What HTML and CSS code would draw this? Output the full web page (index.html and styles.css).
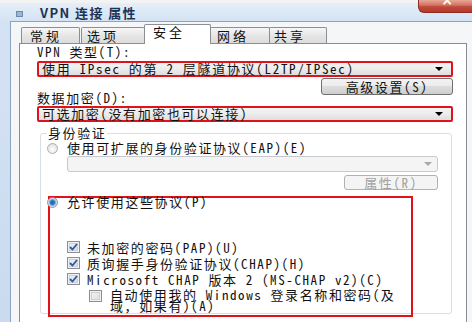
FILE: index.html
```html
<!DOCTYPE html>
<html lang="zh-CN">

<head>
    <meta charset="UTF-8">
    <meta name="viewport" content="width=device-width, initial-scale=1.0">
    <title>VPN 连接 属性</title>
    <link rel="stylesheet" href="styles.css">
</head>

<body>

<div class="window">
    <!-- title bar -->
    <div class="titlebar">
        <div class="app-icon"></div>
        <div class="title">VPN 连接 属性</div>
        <div class="close-btn"><span>×</span></div>
    </div>

    <div class="client">
        <div class="tabs">
            <div class="tab">常规</div>
            <div class="tab">选项</div>
            <div class="tab active">安全</div>
            <div class="tab">网络</div>
            <div class="tab">共享</div>
        </div>

        <div class="panel">
            <div class="label">VPN 类型(T):</div>
            <div class="combo marked wide">使用 IPsec 的第 2 层隧道协议(L2TP/IPSec)<span class="arrow"></span></div>

            <div class="row-split">
                <div class="label label-low">数据加密(D):</div>
                <button class="btn btn-adv">高级设置(S)</button>
            </div>
            <div class="combo marked">可选加密(没有加密也可以连接)<span class="arrow"></span></div>

            <fieldset class="group">
                <legend>身份验证</legend>
                <div class="option"><span class="radio"></span>使用可扩展的身份验证协议(EAP)(E)</div>
                <div class="combo disabled"><span class="arrow"></span></div>
                <div class="btn-row"><button class="btn disabled">属性(R)</button></div>

                <!-- red box drawn round the protocol list -->
                <div class="highlight">
                    <div class="option option-tight"><span class="radio checked"></span>允许使用这些协议(P)</div>
                    <div class="check-list">
                        <div class="check">
                            <span class="box checked"><svg width="9" height="8" viewBox="0 0 9 8"><path d="M1 4 L3.5 6.5 L8 1" fill="none" stroke="#33579b" stroke-width="1.8"/></svg></span>
                            未加密的密码(PAP)(U)
                        </div>
                        <div class="check">
                            <span class="box checked"><svg width="9" height="8" viewBox="0 0 9 8"><path d="M1 4 L3.5 6.5 L8 1" fill="none" stroke="#33579b" stroke-width="1.8"/></svg></span>
                            质询握手身份验证协议(CHAP)(H)
                        </div>
                        <div class="check">
                            <span class="box checked"><svg width="9" height="8" viewBox="0 0 9 8"><path d="M1 4 L3.5 6.5 L8 1" fill="none" stroke="#33579b" stroke-width="1.8"/></svg></span>
                            Microsoft CHAP 版本 2 (MS-CHAP v2)(C)
                        </div>
                        <div class="check check-sub">
                            <span class="box"></span>
                            <span class="check-text">自动使用我的 Windows 登录名称和密码(及域，如果有)(A)</span>
                        </div>
                    </div>
                </div>
            </fieldset>
        </div>
    </div>
</div>

</body>

</html>
```

FILE: styles.css
```css
* {
    box-sizing: border-box;
}

body {
    margin: 0;
    background-color: #d3e2f3;
    font-family: "Noto Sans Mono CJK SC", "Noto Sans CJK SC", "Liberation Mono", monospace;
    font-size: 13px;
    letter-spacing: 1.6px;
    color: #111;
}

.window {
    width: 472px;
    height: 322px;
    overflow: hidden;
    background: linear-gradient(#f3f3f3 0, #f3f3f3 3px, #e6eef8 3px, #d4e3f4 21px, #cadbf0 100%);
}

/* title bar */
.titlebar {
    height: 21px;
    padding-top: 3px;
    display: flex;
    align-items: center;
}

.app-icon {
    width: 7px;
    height: 6px;
    margin-left: 16px;
    margin-top: 4px;
    background-color: #9fb4cf;
    border: 1px solid #6f89ab;
}

.title {
    margin-left: 17px;
    font-family: "Noto Sans CJK SC", sans-serif;
    font-weight: bold;
    font-size: 13px;
    letter-spacing: 1.4px;
    color: #1d3354;
}

.close-btn {
    margin-left: auto;
    margin-right: -4px;
    margin-top: -3px;
    align-self: flex-start;
    width: 58px;
    height: 13px;
    background: linear-gradient(#e9a796, #d0705f 45%, #c24a3d 55%, #b3392e);
    border: 1px solid #8e2b23;
    border-top: none;
    border-radius: 0 0 6px 6px;
    overflow: hidden;
    text-align: center;
}

.close-btn span {
    display: block;
    margin-top: -7px;
    color: #fff;
    font-family: "DejaVu Sans", sans-serif;
    font-size: 14px;
    font-weight: bold;
    line-height: 14px;
    letter-spacing: 0;
}

/* dialog body */
.client {
    margin-left: 10px;
    height: 301px;
    background-color: #f5f6f7;
    border-left: 1px solid #8fa3be;
    border-top: 1px solid #8fa3be;
}

.tabs {
    height: 21px;
    padding-left: 10px;
    display: flex;
    align-items: flex-end;
}

.tab {
    height: 16px;
    width: 59px;
    padding-left: 6px;
    line-height: 15px;
    font-size: 13px;
    letter-spacing: 3px;
    background: linear-gradient(#f7f7f7, #e6e6e6 50%, #dcdcdc);
    border: 1px solid #8c8e94;
    border-bottom: none;
    border-radius: 2px 2px 0 0;
    margin-right: -1px;
}

.tab:nth-child(1) {
    width: 59px;
    padding-left: 8px;
    margin-right: 1px;
}

.tab:nth-child(2) {
    width: 64px;
    padding-left: 5px;
}

.tab.active {
    position: relative;
    z-index: 1;
    width: 67px;
    height: 20px;
    margin-bottom: -1px;
    padding-left: 8px;
    line-height: 14px;
    background: #fff;
}

.tab:nth-child(4) {
    width: 60px;
}

.tab:nth-child(5) {
    width: 58px;
    padding-left: 4px;
}

.panel {
    margin-left: 8px;
    width: 448px;
    height: 290px;
    background-color: #fff;
    border: 1px solid #898c95;
    padding: 1px 13px 0 17px;
}

.label {
    line-height: 14px;
}

.label-low {
    margin-top: 14px;
    line-height: 12px;
}

.row-split {
    margin-top: 1px;
    display: flex;
    justify-content: space-between;
    align-items: flex-start;
}

/* combo boxes */
.combo {
    height: 16px;
    margin-top: 2px;
    padding: 0 8px 0 3px;
    display: flex;
    align-items: center;
    line-height: 12px;
    white-space: nowrap;
    background: linear-gradient(#f4f4f4, #ececec 50%, #dedede);
    border: 1px solid #707070;
    border-radius: 3px;
}

.combo.marked {
    border: 2px solid #e0121c;
    border-radius: 2px;
}

.combo.wide {
    letter-spacing: 1.7px;
}

.arrow {
    margin-left: auto;
    width: 0;
    height: 0;
    border-left: 4px solid transparent;
    border-right: 4px solid transparent;
    border-top: 4px solid #000;
}

.combo.disabled {
    margin-top: 1px;
    margin-left: 20px;
    padding-right: 5px;
    background: #f4f4f4;
    border-color: #c6c9cd;
}

.combo.disabled .arrow {
    border-top-color: #a8a8a8;
}

/* buttons */
.btn {
    height: 17px;
    width: 132px;
    padding: 0;
    font-family: inherit;
    font-size: 13px;
    letter-spacing: 1.6px;
    line-height: 14px;
    color: #111;
    background: linear-gradient(#f3f3f3, #ebebeb 50%, #dddddd 50%, #cfcfcf);
    border: 1px solid #707070;
    border-radius: 3px;
}

.btn.disabled {
    width: 94px;
    height: 15px;
    line-height: 12px;
    color: #a2a2a2;
    background: #f4f4f4;
    border-color: #adb2b5;
}

.btn-row {
    margin-top: 3px;
    display: flex;
    justify-content: flex-end;
}

/* authentication group */
.group {
    margin: 4px 1px 0 3px;
    padding: 1px 13px 0 6px;
    border: 1px solid #d5dfe5;
    border-radius: 3px;
    min-width: 0;
}

.group legend {
    padding: 0 1px;
    line-height: 14px;
}

.option {
    display: flex;
    align-items: center;
    line-height: 14px;
    white-space: nowrap;
}

.option-tight {
    margin-top: -2px;
    line-height: 12px;
}

.radio {
    width: 11px;
    height: 11px;
    margin-right: 9px;
    border-radius: 50%;
    border: 1px solid #b0b0b0;
    background: radial-gradient(circle at 50% 60%, #ffffff, #e8e8e8 60%, #d6d6d6);
}

.radio.checked {
    margin-left: -3px;
    border-color: #8d95a0;
    background: radial-gradient(circle, #1f5fae 0, #2f78c8 2px, #9cc6ea 3.5px, #e8e8e8 4.5px, #d5d5d5);
}

.highlight {
    margin: 6px 0 -4px 1px;
    width: 365px;
    padding-bottom: 4px;
    border: 2px solid #e0121c;
}

.check-list {
    margin-top: 31px;
    margin-left: 17px;
}

.check {
    display: flex;
    align-items: center;
    height: 16px;
    white-space: nowrap;
}

.box {
    width: 13px;
    height: 12px;
    margin-right: 7px;
    display: flex;
    align-items: center;
    justify-content: center;
    background: linear-gradient(135deg, #f6f6f6, #dcdcdc);
    border: 1px solid #8f8f8f;
    box-shadow: inset 0 0 0 1px #f0f0f0, inset 0 0 0 2px #c8d2dc;
}

.box.checked {
    background: linear-gradient(135deg, #eef4fb, #cfdcec);
}

.check-sub {
    height: auto;
    margin-top: 2px;
    margin-left: 22px;
    align-items: flex-start;
}

.check-sub .box {
    margin-top: 1px;
    margin-right: 8px;
}

.check-text {
    width: 298px;
    white-space: normal;
    line-height: 11px;
    letter-spacing: 1.6px;
}
```
